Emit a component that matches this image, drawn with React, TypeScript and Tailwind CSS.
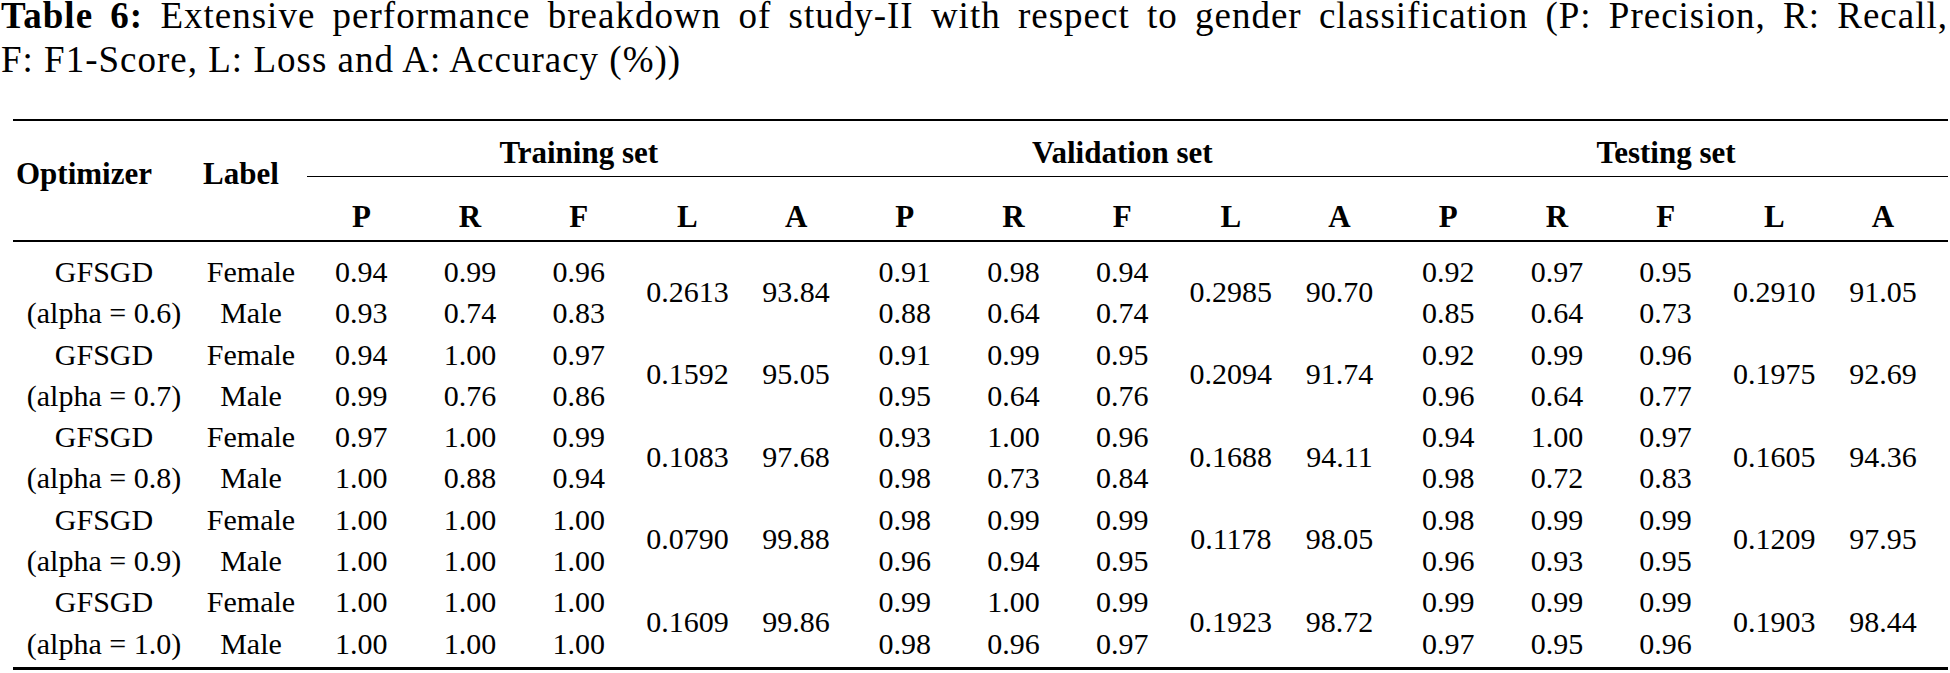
type SetData = {
  female: string[];
  male: string[];
  loss: string;
  acc: string;
};

interface Group {
  alpha: string;
  sets: SetData[];
}

const groups: Group[] = [
  {
    alpha: "0.6",
    sets: [
      { female: ["0.94", "0.99", "0.96"], male: ["0.93", "0.74", "0.83"], loss: "0.2613", acc: "93.84" },
      { female: ["0.91", "0.98", "0.94"], male: ["0.88", "0.64", "0.74"], loss: "0.2985", acc: "90.70" },
      { female: ["0.92", "0.97", "0.95"], male: ["0.85", "0.64", "0.73"], loss: "0.2910", acc: "91.05" },
    ],
  },
  {
    alpha: "0.7",
    sets: [
      { female: ["0.94", "1.00", "0.97"], male: ["0.99", "0.76", "0.86"], loss: "0.1592", acc: "95.05" },
      { female: ["0.91", "0.99", "0.95"], male: ["0.95", "0.64", "0.76"], loss: "0.2094", acc: "91.74" },
      { female: ["0.92", "0.99", "0.96"], male: ["0.96", "0.64", "0.77"], loss: "0.1975", acc: "92.69" },
    ],
  },
  {
    alpha: "0.8",
    sets: [
      { female: ["0.97", "1.00", "0.99"], male: ["1.00", "0.88", "0.94"], loss: "0.1083", acc: "97.68" },
      { female: ["0.93", "1.00", "0.96"], male: ["0.98", "0.73", "0.84"], loss: "0.1688", acc: "94.11" },
      { female: ["0.94", "1.00", "0.97"], male: ["0.98", "0.72", "0.83"], loss: "0.1605", acc: "94.36" },
    ],
  },
  {
    alpha: "0.9",
    sets: [
      { female: ["1.00", "1.00", "1.00"], male: ["1.00", "1.00", "1.00"], loss: "0.0790", acc: "99.88" },
      { female: ["0.98", "0.99", "0.99"], male: ["0.96", "0.94", "0.95"], loss: "0.1178", acc: "98.05" },
      { female: ["0.98", "0.99", "0.99"], male: ["0.96", "0.93", "0.95"], loss: "0.1209", acc: "97.95" },
    ],
  },
  {
    alpha: "1.0",
    sets: [
      { female: ["1.00", "1.00", "1.00"], male: ["1.00", "1.00", "1.00"], loss: "0.1609", acc: "99.86" },
      { female: ["0.99", "1.00", "0.99"], male: ["0.98", "0.96", "0.97"], loss: "0.1923", acc: "98.72" },
      { female: ["0.99", "0.99", "0.99"], male: ["0.97", "0.95", "0.96"], loss: "0.1903", acc: "98.44" },
    ],
  },
];

const setNames = ["Training set", "Validation set", "Testing set"];
const metrics = ["P", "R", "F", "L", "A"];

// two stacked lines (Female / Male row)
function Pair({ top, bottom, width }: { top: string; bottom: string; width: string }) {
  return (
    <div className={`flex flex-col items-center ${width}`}>
      <div className="leading-[41.3px] whitespace-nowrap">{top}</div>
      <div className="leading-[41.3px] whitespace-nowrap">{bottom}</div>
    </div>
  );
}

// merged cell, centred over both lines
function Merged({ value }: { value: string }) {
  return (
    <div className="flex w-[108.7px] items-center justify-center pb-[2px]">
      <span className="leading-[41.3px]">{value}</span>
    </div>
  );
}

export default function App() {
  return (
    <div className="h-[673px] w-[1950px] overflow-hidden bg-white text-black [font-family:'Liberation_Serif','Times_New_Roman',serif]">
      {/* caption */}
      <div className="pl-[1px] pr-[2px] text-[37px] tracking-[1px]">
        <div className="leading-[32px] [text-align-last:justify]">
          <span className="font-bold">Table 6:</span> Extensive performance breakdown of study-II with respect to
          gender classification (P: Precision, R: Recall,
        </div>
        <div className="mt-[11.5px] leading-[32px]">F: F1-Score, L: Loss and A: Accuracy (%))</div>
      </div>

      <div className="ml-[13px] mt-[43.5px] w-[1935px]">
        <div className="h-[2px] bg-black" />

        {/* header */}
        <div className="flex text-[31px] font-bold">
          <div className="w-[182px] pl-[3px] pt-[36px] leading-[34px]">Optimizer</div>
          <div className="w-[112px] pl-[8px] pt-[36px] leading-[34px]">Label</div>
          <div className="flex flex-1 flex-col">
            <div className="flex">
              {setNames.map((name, i) => (
                <div
                  key={name}
                  className={`border-b-[1.5px] border-black pb-[6px] pt-[15px] text-center leading-[34px] ${
                    i === 2 ? "flex-1 pr-[10px]" : "w-[543.5px]"
                  }`}
                >
                  {name}
                </div>
              ))}
            </div>
            <div className="flex pb-[6.5px] pt-[22.5px]">
              {setNames.map((name) =>
                metrics.map((m) => (
                  <div key={name + m} className="w-[108.7px] text-center leading-[34px]">
                    {m}
                  </div>
                ))
              )}
            </div>
          </div>
        </div>

        <div className="h-[2px] bg-black" />

        {/* body */}
        <div className="pb-[3px] pt-[9px] text-[30px]">
          {groups.map((g) => (
            <div key={g.alpha} className="flex">
              <Pair top="GFSGD" bottom={`(alpha = ${g.alpha})`} width="w-[182px]" />
              <Pair top="Female" bottom="Male" width="w-[112px]" />
              {g.sets.map((s, si) => (
                <div key={si} className="flex">
                  {s.female.map((v, k) => (
                    <Pair key={k} top={v} bottom={s.male[k]} width="w-[108.7px]" />
                  ))}
                  <Merged value={s.loss} />
                  <Merged value={s.acc} />
                </div>
              ))}
            </div>
          ))}
        </div>

        <div className="h-[3px] bg-black" />
      </div>
    </div>
  );
}
